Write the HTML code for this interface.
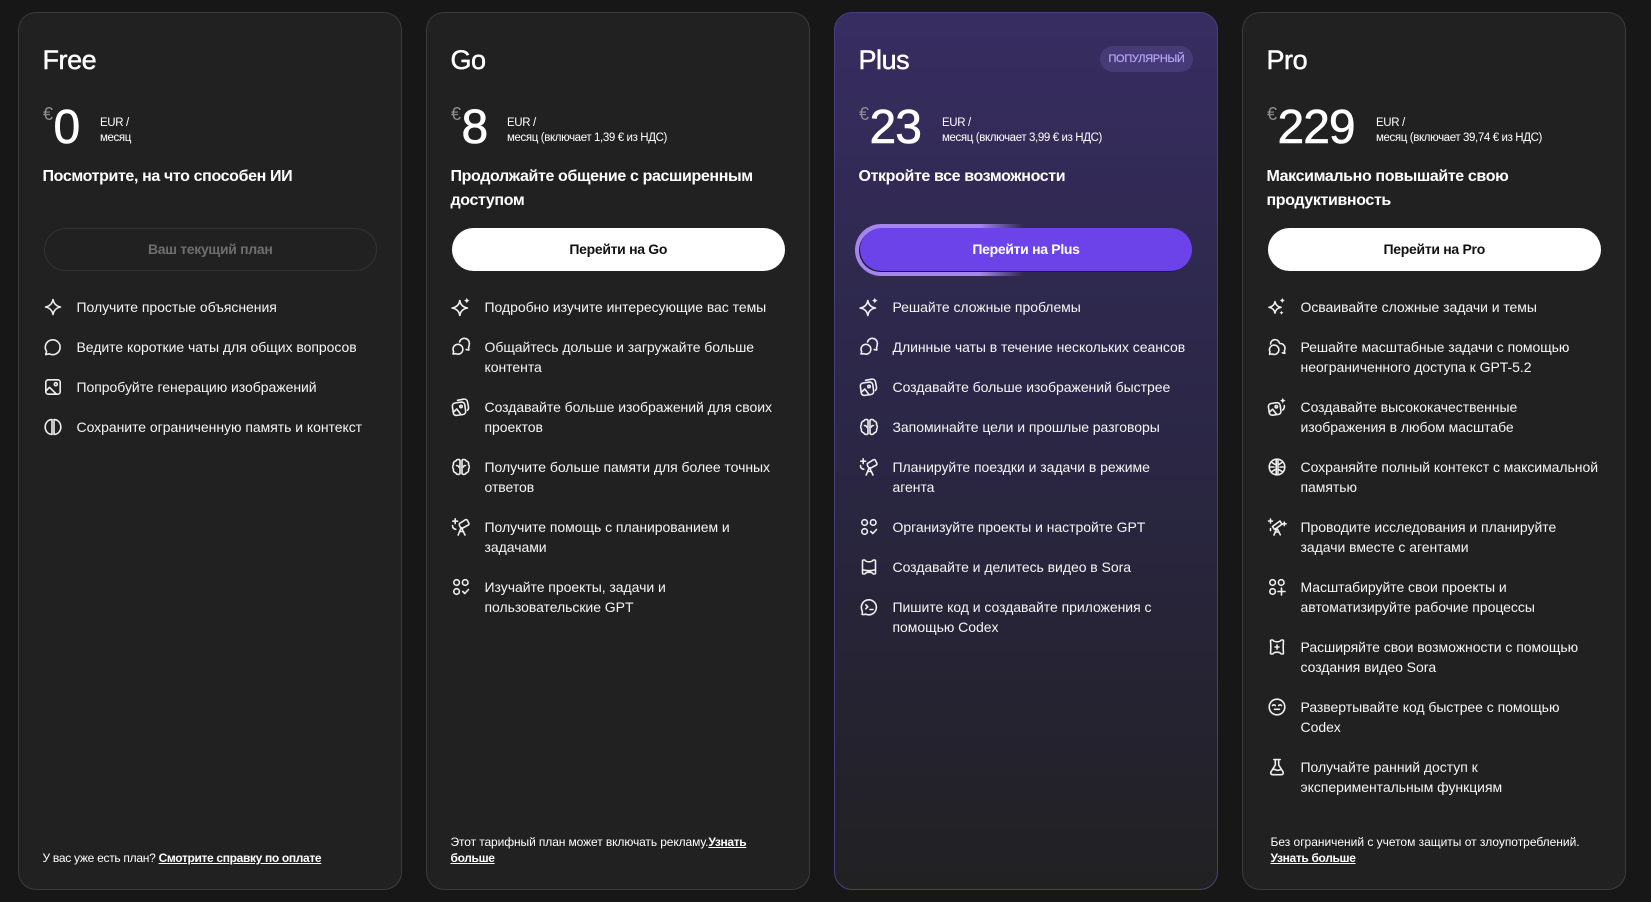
<!DOCTYPE html>
<html lang="ru"><head><meta charset="utf-8"><title>Pricing</title>
<style>
*{box-sizing:border-box}
html,body{margin:0;padding:0;width:1651px;height:902px;overflow:hidden;background:#171717;color:#fff;font-family:"Liberation Sans","Noto Sans CJK SC",sans-serif}
.card{position:absolute;top:12px;width:384.5px;height:877.5px;border:1px solid #3b3b3b;border-radius:18px;background:#212121}
.plus{background:linear-gradient(180deg,#372d61 0,#2f294f 30%,#2a2643 52%,#252331 78%,#212122 100%);border-color:#4a3f7d}
.abs{position:absolute}
.title{position:absolute;left:24px;top:29px;font-size:27px;line-height:36px;letter-spacing:-.45px;-webkit-text-stroke:.45px #fff}
.cur{position:absolute;left:24.500px;top:91px;font-size:18px;line-height:20px;color:#8f8f8f}
.amt{position:absolute;left:35px;top:86px;font-size:48px;line-height:58px;letter-spacing:-1px;-webkit-text-stroke:.6px #fff}
.sub{position:absolute;top:103px;font-size:11.5px;line-height:15px;letter-spacing:-.38px;white-space:nowrap;margin-left:.5px}
.tag{position:absolute;left:24px;top:152px;width:345px;font-size:16px;line-height:23.800px;font-weight:700;letter-spacing:-.37px;white-space:nowrap}
.btn{position:absolute;left:25px;top:215px;width:333.500px;height:42.500px;border-radius:22px;background:#fff;color:#111;text-align:center;font-size:14px;line-height:42px;font-weight:700;letter-spacing:-.3px}
.ul{position:absolute;left:25px;top:284px;margin:0;padding:0;list-style:none}
.ul li{position:relative;padding-left:33px;margin-bottom:20px;font-size:14px;line-height:20px;white-space:nowrap;color:#f5f5f5;letter-spacing:-.04px}
.ul svg{position:absolute;left:-.5px;top:0;width:20px;height:20px;fill:none;stroke:#efefef;stroke-width:1.6;stroke-linecap:round;stroke-linejoin:round}
.ul svg .f{fill:#efefef;stroke:none}
.foot{position:absolute;left:24px;font-size:12px;line-height:15.500px;white-space:nowrap;letter-spacing:-.28px}
.foot b{text-decoration:underline;letter-spacing:-.34px}
</style></head><body>

<div class="card" style="left:17.500px">
<div class="title">Free</div><div class="cur">€</div><div class="amt">0</div>
<div class="sub" style="left:81px">EUR /<br>месяц</div>
<div class="tag">Посмотрите, на что способен ИИ</div>
<div class="btn" style="background:transparent;border:1px solid #333;color:#6e6e6e;line-height:41px">Ваш текущий план</div>
<ul class="ul">
<li><svg viewBox="0 0 20 20"><path d="M10 2.500c.7 4 3.500 6.800 7.500 7.500-4 .7-6.800 3.500-7.500 7.500-.7-4-3.500-6.800-7.500-7.500 4-.7 6.800-3.500 7.500-7.500z"/></svg>Получите простые объяснения</li>
<li><svg viewBox="0 0 20 20"><path d="M2.700 17.600l.9-3.200A7.400 7.400 0 1 1 6.300 16.800z"/></svg>Ведите короткие чаты для общих вопросов</li>
<li><svg viewBox="0 0 20 20"><rect x="2.800" y="2.800" width="14.400" height="14.400" rx="2.500"/><circle cx="12.800" cy="7.200" r="1.500"/><path d="M3 14l3.500-3.700 6.800 6.800"/></svg>Попробуйте генерацию изображений</li>
<li><svg viewBox="0 0 20 20"><path d="M9 2.600C5 2.600 2.200 5.800 2.200 10S5 17.400 9 17.400zM11 2.600c4 0 6.800 3.200 6.800 7.400S15 17.400 11 17.400z"/></svg>Сохраните ограниченную память и контекст</li>
</ul>
<div class="foot" style="top:838px">У вас уже есть план? <b>Смотрите справку по оплате</b></div>
</div>

<div class="card" style="left:425.500px">
<div class="title">Go</div><div class="cur">€</div><div class="amt">8</div>
<div class="sub" style="left:80px">EUR /<br>месяц (включает 1,39 € из НДС)</div>
<div class="tag">Продолжайте общение с расширенным<br>доступом</div>
<div class="btn">Перейти на Go</div>
<ul class="ul">
<li><svg viewBox="0 0 20 20"><path d="M8.800 3.500c.6 4 3.400 6.800 7.700 7.500-4.300.7-7.100 3.500-7.700 7.500-.6-4-3.400-6.800-7.700-7.500 4.300-.7 7.100-3.500 7.700-7.500z"/><path class="f" d="M15.800 .6c.3 1.700 1.300 2.700 3 3-1.700.3-2.700 1.300-3 3-.3-1.700-1.300-2.700-3-3 1.700-.3 2.700-1.300 3-3z"/></svg>Подробно изучите интересующие вас темы</li>
<li><svg viewBox="0 0 20 20"><path d="M2 17l.7-2.300a4.900 4.900 0 1 1 2.200 2z"/><path d="M8.500 5a5 5 0 0 1 9.700 2.800c0 1.100-.3 2-.7 2.800l.4 2.400-2.700-.4"/></svg>Общайтесь дольше и загружайте больше<br>контента</li>
<li><svg viewBox="0 0 20 20"><rect x="1.800" y="5.500" width="12.500" height="12.500" rx="3" transform="rotate(-8 8 12)"/><circle cx="10" cy="9.500" r="1.200"/><path d="M2.800 14.800l3-2.800 3.800 5"/><path d="M6.500 3.300l6-1.100c2-.3 3.600.8 4 2.600l1 5.500c.2 1.200-.2 2.200-1 3"/></svg>Создавайте больше изображений для своих<br>проектов</li>
<li><svg viewBox="0 0 20 20"><path d="M9 3.200C7.800 2 5.500 2.300 4.800 4c-1.800.3-2.800 2-2.300 3.600-1 1.300-1 3.300 0 4.600-.5 1.700.5 3.300 2.300 3.700.7 1.700 3 2 4.200.8zM11 3.200c1.200-1.200 3.500-.9 4.200.8 1.800.3 2.800 2 2.300 3.600 1 1.300 1 3.300 0 4.600.5 1.700-.5 3.300-2.300 3.700-.7 1.700-3 2-4.200.8z"/><path d="M5.500 8.500c1.200 0 2 .6 2.200 1.500M14.500 8.500c-1.200 0-2 .6-2.200 1.500"/></svg>Получите больше памяти для более точных<br>ответов</li>
<li><svg viewBox="0 0 20 20"><path d="M8.500 6.500l5.800-3.700c.7-.4 1.600-.2 2 .5l1.500 2.800c.4.7.2 1.500-.5 1.900l-5.800 3.200"/><path d="M8.500 6.500c-.6 1.800.2 4 3 4.700M10 11l-2.800 7M10.800 11.500l3.200 6.500M8.800 14.500h3.700"/><path d="M4.200 1.800v4.800M1.800 4.200h4.800"/><path d="M1.500 8.500c0 2 1.200 3.500 3.300 3.800"/></svg>Получите помощь с планированием и<br>задачами</li>
<li><svg viewBox="0 0 20 20"><circle cx="5.600" cy="5.500" r="2.800"/><circle cx="14.200" cy="5.500" r="2.800"/><circle cx="5.600" cy="14.500" r="2.800"/><path d="M11.800 14.500l2 2 3.700-4"/></svg>Изучайте проекты, задачи и<br>пользовательские GPT</li>
</ul>
<div class="foot" style="top:822px;letter-spacing:-.1px">Этот тарифный план может включать рекламу.<b>Узнать<br>больше</b></div>
</div>

<div class="card plus" style="left:833.500px">
<div class="title">Plus</div>
<div class="abs" style="left:265.500px;top:33px;width:93px;height:26px;border-radius:13px;background:#463b77;color:#b4a4f3;font-size:11px;line-height:26px;text-align:center;letter-spacing:-.3px;-webkit-text-stroke:.25px #b4a4f3">ПОПУЛЯРНЫЙ</div>
<div class="cur">€</div><div class="amt">23</div>
<div class="sub" style="left:107px">EUR /<br>месяц (включает 3,99 € из НДС)</div>
<div class="tag">Откройте все возможности</div>
<div class="abs" style="left:20.500px;top:211px;width:168px;height:51.500px;border-radius:26px 0 0 26px;background:linear-gradient(90deg,#a586ee 0,#a586ee 74%,rgba(165,134,238,0) 100%)"></div>
<div class="btn" style="left:25.500px;width:332px;background:#6c43e8;color:#fff;box-shadow:-1px 1px 0 #1d1a33">Перейти на Plus</div>
<ul class="ul">
<li><svg viewBox="0 0 20 20"><path d="M8.800 3.500c.6 4 3.400 6.800 7.700 7.500-4.300.7-7.100 3.500-7.700 7.500-.6-4-3.400-6.800-7.700-7.500 4.300-.7 7.100-3.500 7.700-7.500z"/><path class="f" d="M15.800 .6c.3 1.700 1.300 2.700 3 3-1.700.3-2.700 1.300-3 3-.3-1.700-1.300-2.700-3-3 1.700-.3 2.700-1.300 3-3z"/></svg>Решайте сложные проблемы</li>
<li><svg viewBox="0 0 20 20"><path d="M2 17l.7-2.300a4.900 4.900 0 1 1 2.200 2z"/><path d="M8.500 5a5 5 0 0 1 9.700 2.800c0 1.100-.3 2-.7 2.800l.4 2.400-2.700-.4"/></svg>Длинные чаты в течение нескольких сеансов</li>
<li><svg viewBox="0 0 20 20"><rect x="1.800" y="5.500" width="12.500" height="12.500" rx="3" transform="rotate(-8 8 12)"/><circle cx="10" cy="9.500" r="1.200"/><path d="M2.800 14.800l3-2.800 3.800 5"/><path d="M6.500 3.300l6-1.100c2-.3 3.600.8 4 2.600l1 5.500c.2 1.200-.2 2.200-1 3"/></svg>Создавайте больше изображений быстрее</li>
<li><svg viewBox="0 0 20 20"><path d="M9 3.200C7.800 2 5.500 2.300 4.800 4c-1.800.3-2.800 2-2.300 3.600-1 1.300-1 3.300 0 4.600-.5 1.700.5 3.300 2.300 3.700.7 1.700 3 2 4.200.8zM11 3.200c1.200-1.200 3.500-.9 4.200.8 1.800.3 2.800 2 2.300 3.600 1 1.300 1 3.300 0 4.600.5 1.700-.5 3.300-2.300 3.700-.7 1.700-3 2-4.200.8z"/><path d="M5.500 8.500c1.200 0 2 .6 2.200 1.500M14.500 8.500c-1.200 0-2 .6-2.200 1.500"/></svg>Запоминайте цели и прошлые разговоры</li>
<li><svg viewBox="0 0 20 20"><path d="M8.500 6.500l5.800-3.700c.7-.4 1.600-.2 2 .5l1.500 2.800c.4.7.2 1.500-.5 1.900l-5.800 3.200"/><path d="M8.500 6.500c-.6 1.800.2 4 3 4.700M10 11l-2.800 7M10.800 11.500l3.200 6.500M8.800 14.500h3.700"/><path d="M4.200 1.800v4.800M1.800 4.200h4.800"/><path d="M1.500 8.500c0 2 1.200 3.500 3.300 3.800"/></svg>Планируйте поездки и задачи в режиме<br>агента</li>
<li><svg viewBox="0 0 20 20"><circle cx="5.600" cy="5.500" r="2.800"/><circle cx="14.200" cy="5.500" r="2.800"/><circle cx="5.600" cy="14.500" r="2.800"/><path d="M11.800 14.500l2 2 3.700-4"/></svg>Организуйте проекты и настройте GPT</li>
<li><svg viewBox="0 0 20 20"><path d="M3.500 4c0-.6.4-1 1-1h1.300c.7 1.100 2.400 1.800 4.200 1.800s3.500-.7 4.200-1.800h1.300c.6 0 1 .4 1 1v12c0 .6-.4 1-1 1h-1.300c-.7-1.100-2.400-1.800-4.200-1.800s-3.500.7-4.200 1.800H4.500c-.6 0-1-.4-1-1z"/><path d="M3.500 12.800c1.800 0 2.300.9 6.500.9s4.700-.9 6.500-.9"/></svg>Создавайте и делитесь видео в Sora</li>
<li><svg viewBox="0 0 20 20"><path d="M2.700 12.500a7.500 7.500 0 1 1 4 4.600c-1.200.5-2.500.6-3.700.3.500-1 .5-3.300-.3-4.900z"/><path d="M6.800 7.800l2 2-2 2M11 12.500h3"/></svg>Пишите код и создавайте приложения с<br>помощью Codex</li>
</ul>
</div>

<div class="card" style="left:1241.500px">
<div class="title">Pro</div><div class="cur">€</div><div class="amt">229</div>
<div class="sub" style="left:133px">EUR /<br>месяц (включает 39,74 € из НДС)</div>
<div class="tag">Максимально повышайте свою<br>продуктивность</div>
<div class="btn">Перейти на Pro</div>
<ul class="ul">
<li><svg viewBox="0 0 20 20"><path d="M8 4.500c.5 3.200 2.600 5.200 6 5.800-3.400.6-5.500 2.600-6 5.800-.5-3.200-2.600-5.200-6-5.800 3.400-.6 5.500-2.600 6-5.800z"/><path class="f" d="M15.300 .8c.3 1.500 1.200 2.400 2.700 2.700-1.500.3-2.400 1.200-2.700 2.700-.3-1.500-1.200-2.400-2.700-2.700 1.500-.3 2.400-1.200 2.700-2.700zM14.500 13.500c.2 1.200 1 2 2.200 2.200-1.200.2-2 1-2.200 2.200-.2-1.200-1-2-2.200-2.200 1.200-.2 2-1 2.200-2.200z"/></svg>Осваивайте сложные задачи и темы</li>
<li><svg viewBox="0 0 20 20"><path d="M2.500 17.300l.5-2.300a4.700 4.700 0 1 1 2.100 2z"/><path d="M3.500 7a4.500 4.500 0 0 1 8.800-1.200M13 6.500a4.800 4.800 0 0 1 5 5c0 1-.3 1.800-.7 2.500l.5 2.300-2.400-.5"/></svg>Решайте масштабные задачи с помощью<br>неограниченного доступа к GPT-5.2</li>
<li><svg viewBox="0 0 20 20"><rect x="1.800" y="6" width="11.800" height="11.800" rx="3" transform="rotate(-8 8 12)"/><circle cx="9.300" cy="9.800" r="1.200"/><path d="M2.800 14.800l2.800-2.600 3.800 4.800"/><path d="M15.800 13c1.200-1.200 1.800-2.800 1.500-4.500"/><path class="f" d="M15.800 .6c.3 1.700 1.300 2.700 3 3-1.700.3-2.700 1.300-3 3-.3-1.700-1.300-2.700-3-3 1.700-.3 2.700-1.300 3-3z"/></svg>Создавайте высококачественные<br>изображения в любом масштабе</li>
<li><svg viewBox="0 0 20 20"><circle cx="10" cy="10" r="7.800"/><path d="M9.200 2.500v15M11 2.500v15M2.800 10H7M17.200 10H13M5 5.500l2.800 1.800M15 5.500l-2.800 1.800M5 14.500l2.800-1.800M15 14.500l-2.800-1.800"/></svg>Сохраняйте полный контекст с максимальной<br>памятью</li>
<li><svg viewBox="0 0 20 20"><path d="M5.500 9.500l7.500-5.500 2 3.200-7.500 5.300zM9.800 11.500l-2.800 6.500M10.300 11.800l3 6M8 15h4"/><path d="M3.500 2v4M1.500 4h4M17.300 5v3.600M15.500 6.800h3.600M3.500 11.500v2"/></svg>Проводите исследования и планируйте<br>задачи вместе с агентами</li>
<li><svg viewBox="0 0 20 20"><circle cx="5.600" cy="5.500" r="2.800"/><circle cx="14.200" cy="5.500" r="2.800"/><circle cx="5.600" cy="14.500" r="2.800"/><path d="M14.500 11v7M11 14.500h7"/></svg>Масштабируйте свои проекты и<br>автоматизируйте рабочие процессы</li>
<li><svg viewBox="0 0 20 20"><path d="M3.500 4c0-.6.4-1 1-1h1.300c.7 1.100 2.400 1.800 4.200 1.800s3.500-.7 4.200-1.800h1.300c.6 0 1 .4 1 1-.4 4-.4 8 0 12 0 .6-.4 1-1 1h-1.300c-.7-1.100-2.400-1.800-4.200-1.800s-3.500.7-4.200 1.800H4.500c-.6 0-1-.4-1-1 .4-4 .4-8 0-12z"/><path d="M10 8v4M8 10h4"/></svg>Расширяйте свои возможности с помощью<br>создания видео Sora</li>
<li><svg viewBox="0 0 20 20"><circle cx="10" cy="10" r="7.800"/><path d="M5.500 8.500c.8-.9 2-.9 2.800 0M11.700 8.500c.8-.9 2-.9 2.800 0M7.500 12.300h5"/></svg>Развертывайте код быстрее с помощью<br>Codex</li>
<li><svg viewBox="0 0 20 20"><path d="M6.800 2.500h6.400M8.300 2.500v5.500L4 14.800c-.8 1.400.2 2.900 1.700 2.900h8.600c1.500 0 2.500-1.500 1.700-2.900L11.700 8V2.500M5.800 12.500c2-.8 3.500 1 5.200.8 1-.1 2-.5 3-.8"/></svg>Получайте ранний доступ к<br>экспериментальным функциям</li>
</ul>
<div class="foot" style="top:822px;left:28px;letter-spacing:-.02px">Без ограничений с учетом защиты от злоупотреблений.<br><b>Узнать больше</b></div>
</div>

</body></html>
